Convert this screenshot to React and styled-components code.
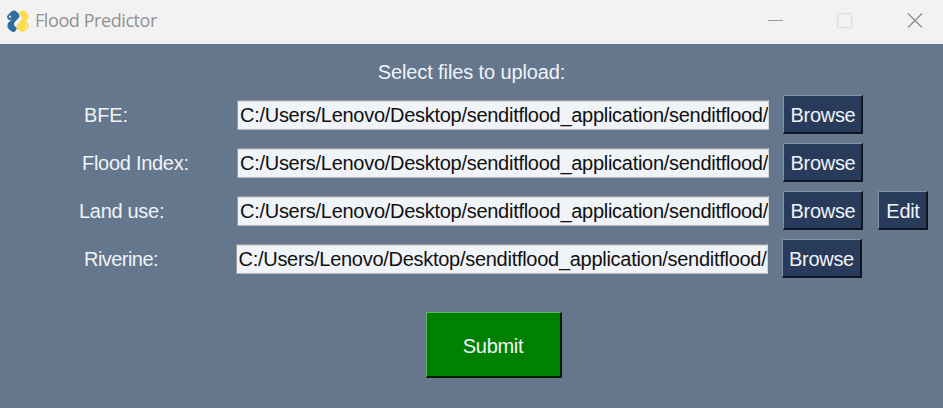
import React from "react";
import styled, { createGlobalStyle } from "styled-components";

const GlobalStyle = createGlobalStyle`
  * { box-sizing: border-box; }
  body { margin: 0; overflow: hidden; background: #64778d; }
`;

const Window = styled.div`
  width: 943px;
  height: 408px;
  display: flex;
  flex-direction: column;
  overflow: hidden;
  background: #64778d;
  color: #f0f3f7;
  font: 20px/24px "Liberation Sans", Arial, sans-serif;
  letter-spacing: -0.3px;
  white-space: nowrap;
`;

const TitleBar = styled.header`
  height: 44px;
  flex: none;
  display: flex;
  align-items: center;
  padding: 0 20px 3px 6px;
  background: #f2f2f2;
  color: #919191;
`;

const Title = styled.h1`
  margin: 0 auto 1px 5px;
  font: 400 18px/24px "Open Sans", "Noto Sans", sans-serif;
  letter-spacing: -0.42px;
`;

const Controls = styled.div`
  display: flex;
  gap: 53px;

  svg { display: block; }
`;

const Heading = styled.div`
  margin-top: 16px;
  text-align: center;
  letter-spacing: -0.12px;
`;

const Rows = styled.div`
  display: grid;
  gap: 9px;
  margin-top: 11px;
`;

const Row = styled.div`
  height: 39px;
  display: flex;
  align-items: center;
  padding-left: ${({ $indent }) => $indent}px;
`;

const Label = styled.label`
  width: ${({ $width }) => $width}px;
  flex: none;
  padding-top: 1px;
  letter-spacing: ${({ $tracking }) => $tracking}px;
`;

const PathField = styled.div`
  width: 532px;
  height: 30px;
  margin-right: 14px;
  flex: none;
  overflow: hidden;
  padding: 2px 0 0 2px;
  border: 1px solid;
  border-color: #999 #d4d4d4 #b5bbc2 #999;
  box-shadow: inset 0 1px #d8dade;
  background: #f0f3f7;
  color: #111;
  letter-spacing: -0.28px;
`;

const Button = styled.button`
  width: ${({ $width }) => $width}px;
  height: 39px;
  flex: none;
  margin-right: 15px;
  padding: 2px 0 0 1px;
  border: 2px solid;
  border-color: #8390a5 #10151f #10151f #8390a5;
  border-top-width: 1px;
  border-left-width: 1px;
  background: #283b5b;
  color: #f0f3f7;
  font: inherit;
  letter-spacing: inherit;
`;

const SubmitButton = styled(Button)`
  height: 66px;
  margin: 34px 0 0 426px;
  padding: 2px 1px 0 0;
  border-color: #62b562 #001e00 #001e00 #62b562;
  background: #008000;
`;

const PATH = "C:/Users/Lenovo/Desktop/senditflood_application/senditflood/";

const FILES = [
  { name: "BFE:", indent: 84, width: 153, tracking: -0.15 },
  { name: "Flood Index:", indent: 82, width: 155, tracking: -0.28 },
  { name: "Land use:", indent: 79, width: 158, tracking: -0.3, editable: true },
  { name: "Riverine:", indent: 84, width: 151.5, tracking: -0.55 },
];

const SNAKE =
  "M1 8Q.8 6 3 4L6 1.2Q8 .2 10 1.5L12.7 4Q14.2 6 12.8 8L8.5 12.5Q7.3 14.5 8.5 16L11 18.6Q9.8 22 7.6 22.5Q5 22 2 18.5Q.8 16 2 13.5L6 9Q4 11 2.5 10Z";

function Logo() {
  return (
    <svg width="24" height="24" viewBox="0 0 24 24">
      <g transform="translate(0 .7)">
        <path d={SNAKE} fill="#306d9f" />
        <path d={SNAKE} fill="#ffdc4d" transform="rotate(180 12 11.5)" />
        <circle cx="4" cy="7" r="1.1" fill="#f2f2f2" />
        <circle cx="20" cy="16" r="1.1" fill="#f2f2f2" />
      </g>
    </svg>
  );
}

function WindowControls() {
  return (
    <Controls>
      <svg width="16" height="16" viewBox="0 0 16 16">
        <path d="M0 7.5h15" stroke="#999" />
      </svg>
      <svg width="17" height="16" viewBox="0 0 17 16">
        <rect x=".6" y=".6" width="14" height="14" rx="1.5" fill="none" stroke="#dedede" strokeWidth="1.3" />
      </svg>
      <svg width="16" height="16" viewBox="0 0 16 16">
        <path d="m1 .5 14 14m0-14-14 14" stroke="#8d8d8d" strokeWidth="1.3" />
      </svg>
    </Controls>
  );
}

export default function App() {
  return (
    <Window>
      <GlobalStyle />
      <TitleBar>
        <Logo />
        <Title>Flood Predictor</Title>
        <WindowControls />
      </TitleBar>
      <Heading>Select files to upload:</Heading>
      <Rows>
        {FILES.map((file) => (
          <Row key={file.name} $indent={file.indent}>
            <Label $width={file.width} $tracking={file.tracking}>{file.name}</Label>
            <PathField>{PATH}</PathField>
            <Button $width={80}>Browse</Button>
            {file.editable && <Button $width={50}>Edit</Button>}
          </Row>
        ))}
      </Rows>
      <SubmitButton $width={136}>Submit</SubmitButton>
    </Window>
  );
}
